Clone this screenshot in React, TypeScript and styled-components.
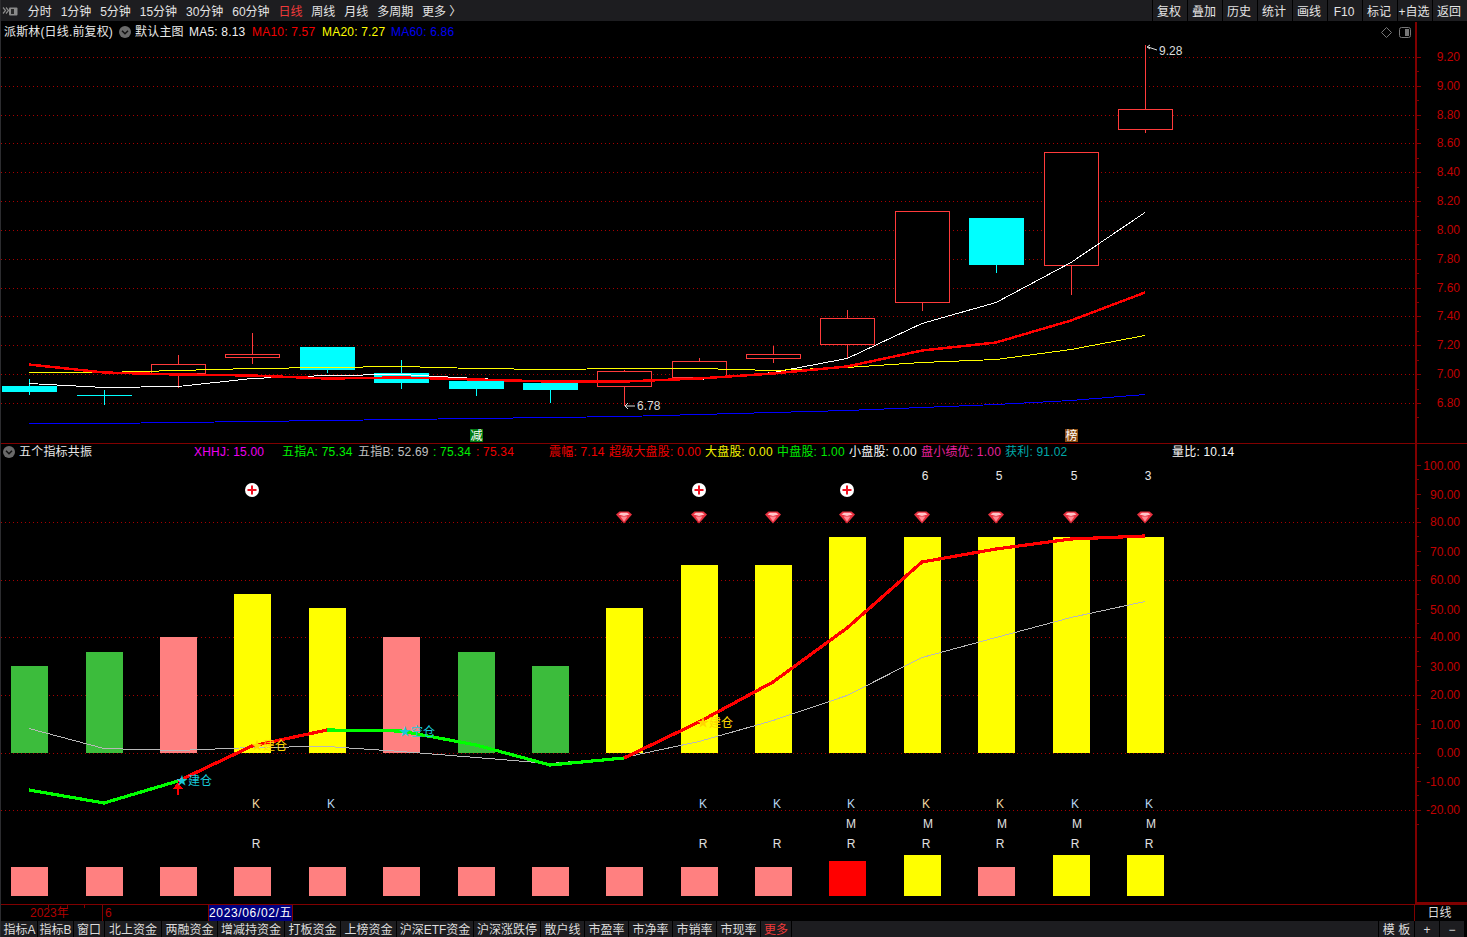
import React from 'react';
import styled, { createGlobalStyle } from 'styled-components';

const FONT = '"Liberation Sans", "Noto Sans CJK SC", sans-serif';
const XS = [29, 104, 178, 252, 327, 401, 476, 550, 624, 699, 773, 847, 922, 996, 1071, 1145];

const Global = createGlobalStyle`
  html, body { margin: 0; padding: 0; background: #000; overflow: hidden; }
  body { font-family: ${FONT}; font-size: 12px; color: #ddd; }
`;

const Page = styled.div`
  width: 1467px; height: 937px; background: #000; display: flex; flex-direction: column;
  border-left: 1px solid #2c2c2f; box-sizing: border-box; overflow: hidden;
`;
const Toolbar = styled.div`
  height: 22px; flex: none; box-sizing: border-box; background: #1d1d20; border-bottom: 1px solid #000;
  display: flex; align-items: center;
`;
const Logo = styled.svg`width: 18px; height: 14px; flex: none; margin-right: 4.3px;`;
const Period = styled.span<{ $active?: boolean }>`
  padding: 0 4.45px; white-space: nowrap; line-height: 24px; height: 21px; color: ${p => (p.$active ? '#f03a3a' : '#e4e4e4')};
`;
const Spacer = styled.div`flex: 1;`;
const ToolButton = styled.span`
  width: 35px; height: 21px; box-sizing: border-box; flex: none; border-left: 1px solid #000; line-height: 24px;
  padding-right: 2px; text-align: center; color: #e4e4e4; white-space: nowrap; overflow: hidden;
`;
const Pane = styled.div<{ $h: number; $top?: boolean }>`
  height: ${p => p.$h}px; flex: none; box-sizing: border-box; display: grid; grid-template-columns: 1414px 52px;
  border-top: ${p => (p.$top ? '1px solid #800000' : 'none')};
`;
const Plot = styled.div`position: relative; overflow: hidden;`;
const PlotSvg = styled.svg`display: block;`;
const AxisCol = styled.div<{ $bottom?: boolean }>`
  border-left: 2px solid #800000; box-sizing: border-box;
  border-bottom: ${p => (p.$bottom ? '2px solid #800000' : 'none')};
`;
const AxisSvg = styled.svg`display: block;`;
const Legend = styled.div<{ $h: number }>`
  position: absolute; left: 0; top: 0; height: ${p => p.$h}px; display: flex; align-items: center; white-space: nowrap;
`;
const LegendItem = styled.span<{ $w: number; $c: string }>`
  flex: 0 0 ${p => p.$w}px; color: ${p => p.$c}; line-height: 14px; letter-spacing: 0.2px;
`;
const TitleItem = styled(LegendItem)`letter-spacing: 0.15px;`;
const Chevron = styled.svg<{ $w: number }>`flex: 0 0 auto; width: 12px; height: 12px; margin-right: ${p => p.$w}px;`;
const LegendPad = styled.span<{ $w: number }>`flex: 0 0 ${p => p.$w}px;`;
const TimeRow = styled.div`
  height: 17px; flex: none; box-sizing: border-box; border-top: 1px solid #800000; display: flex; position: relative;
  color: #b00000; line-height: 16px;
`;
const YearCell = styled.div`width: 102px; padding-left: 29px; box-sizing: border-box; border-right: 1px solid #800000;`;
const MonthCell = styled.div`width: 106px; padding-left: 2px; box-sizing: border-box; border-right: 1px solid #800000;`;
const DateCell = styled.div`
  width: 84px; box-sizing: border-box; background: #000080; color: #fff; text-align: center; border-right: 1px solid #800000;
  white-space: nowrap; letter-spacing: 0.65px;
`;
const TimeFill = styled.div`flex: 1; border-right: 1px solid #800000;`;
const TimeUnit = styled.div`width: 52px; box-sizing: border-box; padding-right: 3px; text-align: center; color: #ddd;`;
const Tick = styled.i<{ $x: number }>`
  position: absolute; left: ${p => p.$x}px; top: 0; width: 1px; height: 3px; background: #800000;
`;
const BottomBar = styled.div`height: 16px; flex: none; background: #1d1d20; display: flex; padding-left: 1px;`;
const Tab = styled.span<{ $w: number; $red?: boolean }>`
  flex: 0 0 ${p => p.$w}px; box-sizing: border-box; border-right: 1px solid #000; text-align: center; line-height: 18px;
  color: ${p => (p.$red ? '#f03a3a' : '#dcdcdc')}; white-space: nowrap; overflow: hidden;
`;
const EndTab = styled(Tab)`border-right: none; border-left: 1px solid #000;`;
const Tail = styled.div`width: 3px; background: #000; flex: none;`;
const ChartText = styled.text<{ $c?: string; $anchor?: string }>`
  font-family: ${FONT}; font-size: 12px; fill: ${p => p.$c || '#ddd'}; text-anchor: ${p => p.$anchor || 'start'};
  dominant-baseline: central;
`;
const AxisText = styled(ChartText)`fill: #c00000; text-anchor: end;`;

const candles = [
  { c: 0, x: 2, t: 386, b: 392, hi: 379, lo: 395 },
  { c: 0, x: 77, t: 395, b: 396, hi: 390, lo: 405 },
  { c: 1, x: 151, t: 364, b: 373, hi: 355, lo: 388 },
  { c: 1, x: 225, t: 354, b: 357, hi: 333, lo: 364 },
  { c: 0, x: 300, t: 347, b: 370, hi: 347, lo: 373 },
  { c: 0, x: 374, t: 373, b: 383, hi: 360, lo: 389 },
  { c: 0, x: 449, t: 381, b: 389, hi: 378, lo: 396 },
  { c: 0, x: 523, t: 383, b: 390, hi: 381, lo: 403 },
  { c: 1, x: 597, t: 371, b: 386, hi: 370, lo: 406 },
  { c: 1, x: 672, t: 361, b: 377, hi: 358, lo: 377 },
  { c: 1, x: 746, t: 354, b: 358, hi: 346, lo: 363 },
  { c: 1, x: 820, t: 318, b: 344, hi: 310, lo: 358 },
  { c: 1, x: 895, t: 211, b: 302, hi: 211, lo: 311 },
  { c: 0, x: 969, t: 218, b: 265, hi: 218, lo: 273 },
  { c: 1, x: 1044, t: 152, b: 265, hi: 152, lo: 295 },
  { c: 1, x: 1118, t: 109, b: 129, hi: 45, lo: 133 },
];
const line = (ys: number[]) => ys.map((y, i) => `${XS[i]},${y + 0.5}`).join(' ');
const ma5 = [383, 387, 386, 378, 375, 374, 378, 381, 381, 379, 372, 358, 323, 302, 262, 212];
const ma10 = [364, 372, 374, 375, 378, 377, 379, 381, 381, 378, 373, 366, 350, 342, 320, 292];
const ma20 = [372, 372, 370, 368, 367, 366, 368, 369, 368, 368, 370, 367, 362, 359, 349, 335];
const ma60 = [423, 423, 422, 421, 420, 419, 418, 417, 416, 414, 412, 410, 407, 404, 400, 394];
const strong = [790, 803, 781, 746, 730, 731, 745, 765, 758, 722, 682, 628, 562, 549, 539, 536];
const thin = [728, 748, 750, 747, 746, 751, 757, 763, 757, 741, 720, 695, 657, 637, 617, 601];
const seg = (a: number, b: number) => strong.slice(a, b + 1).map((y, i) => `${XS[a + i]},${y}`).join(' ');

const GREEN = '#3cbc3c', PINK = '#ff8080', YEL = '#ffff00';
const bars = [
  [11, 666, GREEN], [86, 652, GREEN], [160, 637, PINK], [234, 594, YEL], [309, 608, YEL], [383, 637, PINK],
  [458, 652, GREEN], [532, 666, GREEN], [606, 608, YEL], [681, 565, YEL], [755, 565, YEL], [829, 537, YEL],
  [904, 537, YEL], [978, 537, YEL], [1053, 537, YEL], [1127, 537, YEL],
] as [number, number, string][];
const foot = [867, 867, 867, 867, 867, 867, 867, 867, 867, 867, 867, 861, 855, 867, 855, 855];
const footColor = (i: number) => (i === 11 ? '#ff0000' : foot[i] === 855 ? YEL : PINK);
const upperGrid = Array.from({ length: 13 }, (_, i) => 57 + i * 28.83);
const lowerGrid = [522, 580, 637, 695, 753, 810];
const lowerTicks = [465, 494, 522, 551, 580, 609, 637, 666, 695, 724, 753, 781, 810];
const lowerLabels = ['100.00', '90.00', '80.00', '70.00', '60.00', '50.00', '40.00', '30.00', '20.00', '10.00', '0.00', '-10.00', '-20.00'];

const Dots = ({ y }: { y: number }) => (
  <line x1={1} x2={1415} y1={Math.round(y) + 0.5} y2={Math.round(y) + 0.5} stroke="#a80000" strokeDasharray="1 3" shapeRendering="crispEdges" />
);
const Plus = ({ x }: { x: number }) => (
  <g>
    <circle cx={x} cy={490} r={7} fill="#fff" />
    <path d={`M${x - 4.5} 490H${x + 4.5}M${x} 485.5V494.5`} stroke="#f01020" strokeWidth={2} />
  </g>
);
const Gem = ({ x }: { x: number }) => (
  <g transform={`translate(${x} 517)`}>
    <polygon points="-8,-2.5 -4.5,-5.5 4.5,-5.5 8,-2.5 0,6.5" fill="#e8303f" />
    <polygon points="-5.5,-2.5 -3,-4.2 3,-4.2 5.5,-2.5 0,-1" fill="#ffc4c8" />
    <polygon points="-3.5,-0.5 3.5,-0.5 0,4.5" fill="#ff8a94" />
  </g>
);
const Circle = ({ mr }: { mr: number }) => (
  <Chevron $w={mr} viewBox="0 0 12 12">
    <circle cx="6" cy="6" r="6" fill="#6a6a6a" />
    <path d="M3 4.8 6 7.8 9 4.8" fill="none" stroke="#111" strokeWidth="1.5" />
  </Chevron>
);

const periods = ['分时', '1分钟', '5分钟', '15分钟', '30分钟', '60分钟', '日线', '周线', '月线', '多周期', '更多 〉'];
const tools = ['复权', '叠加', '历史', '统计', '画线', 'F10', '标记', '+自选', '返回'];
const tabs: [string, number, boolean?][] = [
  ['指标A', 36], ['指标B', 36], ['窗口', 31], ['北上资金', 57], ['两融资金', 56], ['增减持资金', 67], ['打板资金', 56],
  ['上榜资金', 56], ['沪深ETF资金', 77], ['沪深涨跌停', 67], ['散户线', 44], ['市盈率', 44], ['市净率', 44], ['市销率', 44],
  ['市现率', 44], ['更多', 31, true],
];

export default function App() {
  return (
    <Page>
      <Global />
      <Toolbar>
        <Logo viewBox="0 0 18 14">
          <path d="M2 3.5 4.5 6.5 2 9.5M5 3.5 7.5 6.5 5 9.5" fill="none" stroke="#8a8a8a" strokeWidth="1.2" />
          <rect x="8" y="3.5" width="8.5" height="8" rx="1" fill="#8a8a8a" />
          <rect x="10" y="5" width="3" height="5" fill="#2a2a2a" />
        </Logo>
        {periods.map((t, i) => (
          <Period key={t} $active={i === 6}>{t}</Period>
        ))}
        <Spacer />
        {tools.map(t => (
          <ToolButton key={t}>{t}</ToolButton>
        ))}
      </Toolbar>

      <Pane $h={421}>
        <Plot>
          <PlotSvg width={1414} height={421} viewBox="1 22 1414 421">
            {upperGrid.map(y => <Dots key={y} y={y} />)}
            {candles.map((k, i) => {
              const col = k.c ? '#ff3b3b' : '#00ffff';
              const cx = XS[i];
              return (
                <g key={i} shapeRendering="crispEdges">
                  <line x1={cx + 0.5} x2={cx + 0.5} y1={k.hi} y2={k.t} stroke={col} />
                  <line x1={cx + 0.5} x2={cx + 0.5} y1={k.b} y2={k.lo} stroke={col} />
                  {k.c ? (
                    <rect x={k.x + 0.5} y={k.t + 0.5} width={54} height={k.b - k.t} fill="#000" stroke={col} />
                  ) : (
                    <rect x={k.x} y={k.t} width={55} height={k.b - k.t} fill={col} />
                  )}
                </g>
              );
            })}
            <g fill="none" shapeRendering="crispEdges">
              <polyline points={line(ma60)} stroke="#0000ff" strokeWidth={1} />
              <polyline points={line(ma5)} stroke="#ffffff" strokeWidth={1} />
              <polyline points={line(ma20)} stroke="#ffff00" strokeWidth={1} />
              <polyline points={line(ma10)} stroke="#ff0000" strokeWidth={2.5} />
            </g>
            <path d="M1148 47 1157 50M1147 47 1150 45M1147 47 1150 49" stroke="#ddd" fill="none" />
            <ChartText x={1159} y={50.5}>9.28</ChartText>
            <path d="M625 406H635M625 406 628 403M625 406 628 409" stroke="#ddd" fill="none" />
            <ChartText x={637} y={405.5}>6.78</ChartText>
            <rect x={470} y={429} width={13} height={13} fill="#007a10" />
            <ChartText x={476.5} y={435.5} $c="#fff" $anchor="middle">减</ChartText>
            <rect x={1065} y={429} width={13} height={13} fill="#8a4a10" />
            <ChartText x={1071.5} y={435.5} $c="#fff" $anchor="middle">榜</ChartText>
            <path d="M1386.5 27.5 1391.5 32.5 1386.5 37.5 1381.5 32.5Z" fill="none" stroke="#777" />
            <rect x={1399.5} y={27.5} width={11} height={10} rx={2} fill="none" stroke="#777" />
            <rect x={1405} y={29} width={4} height={7} fill="#777" />
          </PlotSvg>
          <Legend $h={19}>
            <LegendPad $w={3} />
            <TitleItem $w={115} $c="#e8e8e8">派斯林(日线.前复权)</TitleItem>
            <Circle mr={4} />
            <LegendItem $w={54} $c="#e8e8e8">默认主图</LegendItem>
            <LegendItem $w={63} $c="#f0f0f0">MA5: 8.13</LegendItem>
            <LegendItem $w={70} $c="#f00000">MA10: 7.57</LegendItem>
            <LegendItem $w={69} $c="#ffff00">MA20: 7.27</LegendItem>
            <LegendItem $w={70} $c="#0000f0">MA60: 6.86</LegendItem>
          </Legend>
        </Plot>
        <AxisCol>
          <AxisSvg width={50} height={421} viewBox="1417 22 50 421">
            {upperGrid.map((y, i) => (
              <g key={y}>
                <path d={`M1417 ${Math.round(y) + 0.5}H1421M1417 ${Math.round(y + 14.4) + 0.5}H1419`} stroke="#800000" />
                <AxisText x={1460} y={y}>{(9.2 - i * 0.2).toFixed(2)}</AxisText>
              </g>
            ))}
          </AxisSvg>
        </AxisCol>
      </Pane>

      <Pane $h={461} $top>
        <Plot>
          <PlotSvg width={1414} height={460} viewBox="1 444 1414 460">
            {lowerGrid.map(y => <Dots key={y} y={y} />)}
            <g shapeRendering="crispEdges">
              {bars.map(([x, t, c]) => <rect key={x} x={x} y={t} width={37} height={753 - t} fill={c} />)}
              {bars.map(([x], i) => <rect key={x} x={x} y={foot[i]} width={37} height={896 - foot[i]} fill={footColor(i)} />)}
              <polyline points={line(thin)} fill="none" stroke="#b8b8b8" />
              <polyline points={seg(0, 2)} fill="none" stroke="#00ff00" strokeWidth={3.2} />
              <polyline points={seg(2, 4)} fill="none" stroke="#ff0000" strokeWidth={3.2} />
              <polyline points={seg(4, 8)} fill="none" stroke="#00ff00" strokeWidth={3.2} />
              <polyline points={seg(8, 15)} fill="none" stroke="#ff0000" strokeWidth={3.2} />
              <path d="M178 795V788" stroke="#ff0000" strokeWidth={2} />
              <path d="M173 789H183L178 782Z" fill="#ff0000" />
            </g>
            {[252, 699, 847].map(x => <Plus key={x} x={x} />)}
            {XS.slice(8).map(x => <Gem key={x} x={x} />)}
            <ChartText x={176} y={780.5} $c="#19c8d8">★建仓</ChartText>
            <ChartText x={251} y={745.5} $c="#ffd800">★建仓</ChartText>
            <ChartText x={399} y={732} $c="#19c8d8">★空仓</ChartText>
            <ChartText x={697} y={722.5} $c="#ffd800">★建仓</ChartText>
            {[['6', 925], ['5', 999], ['5', 1074], ['3', 1148]].map(([t, x]) => (
              <ChartText key={x} x={x} y={475.5} $c="#e8e8e8" $anchor="middle">{t}</ChartText>
            ))}
            {[256, 331, 703, 777, 851, 926, 1000, 1075, 1149].map((x, i) => (
              <ChartText key={x} x={x} y={803.5} $c={i === 0 || i === 5 || i === 6 ? '#f0d8a0' : '#b8d8f0'} $anchor="middle">K</ChartText>
            ))}
            {[851, 928, 1002, 1077, 1151].map(x => (
              <ChartText key={x} x={x} y={823.5} $c="#e0e0e0" $anchor="middle">M</ChartText>
            ))}
            {[256, 703, 777, 851, 926, 1000, 1075, 1149].map(x => (
              <ChartText key={x} x={x} y={843.5} $c="#e0e0e0" $anchor="middle">R</ChartText>
            ))}
          </PlotSvg>
          <Legend $h={15}>
            <LegendPad $w={2} />
            <Circle mr={4} />
            <LegendItem $w={175} $c="#e8e8e8">五个指标共振</LegendItem>
            <LegendItem $w={88} $c="#f000f0">XHHJ: 15.00</LegendItem>
            <LegendItem $w={76} $c="#00f000">五指A: 75.34</LegendItem>
            <LegendItem $w={75} $c="#c0c0c0">五指B: 52.69</LegendItem>
            <LegendItem $w={43} $c="#00f000">: 75.34</LegendItem>
            <LegendItem $w={73} $c="#f00000">: 75.34</LegendItem>
            <LegendItem $w={60} $c="#f00000">震幅: 7.14</LegendItem>
            <LegendItem $w={96} $c="#f00000">超级大盘股: 0.00</LegendItem>
            <LegendItem $w={72} $c="#f0f000">大盘股: 0.00</LegendItem>
            <LegendItem $w={72} $c="#00e800">中盘股: 1.00</LegendItem>
            <LegendItem $w={72} $c="#f8f8f8">小盘股: 0.00</LegendItem>
            <LegendItem $w={84} $c="#e8209a">盘小绩优: 1.00</LegendItem>
            <LegendItem $w={167} $c="#00a8a8">获利: 91.02</LegendItem>
            <LegendItem $w={70} $c="#f8f8f8">量比: 10.14</LegendItem>
          </Legend>
        </Plot>
        <AxisCol $bottom>
          <AxisSvg width={50} height={458} viewBox="1417 444 50 458">
            {lowerTicks.map((y, i) => (
              <g key={y}>
                <path d={`M1417 ${y + 0.5}H1421M1417 ${y + 14.5}H1419`} stroke="#800000" />
                <AxisText x={1460} y={y + (i % 2 === 1 || i === 0 ? 0.5 : 0)}>{lowerLabels[i]}</AxisText>
              </g>
            ))}
          </AxisSvg>
        </AxisCol>
      </Pane>

      <TimeRow>
        <Tick $x={47} />
        <Tick $x={66} />
        <Tick $x={83} />
        <YearCell>2023年</YearCell>
        <MonthCell>6</MonthCell>
        <DateCell>2023/06/02/五</DateCell>
        <TimeFill />
        <TimeUnit>日线</TimeUnit>
      </TimeRow>

      <BottomBar>
        {tabs.map(([t, w, red]) => (
          <Tab key={t} $w={w} $red={red}>{t}</Tab>
        ))}
        <Spacer />
        <EndTab $w={36}>模 板</EndTab>
        <EndTab $w={25}>+</EndTab>
        <EndTab $w={25}>−</EndTab>
        <Tail />
      </BottomBar>
    </Page>
  );
}
